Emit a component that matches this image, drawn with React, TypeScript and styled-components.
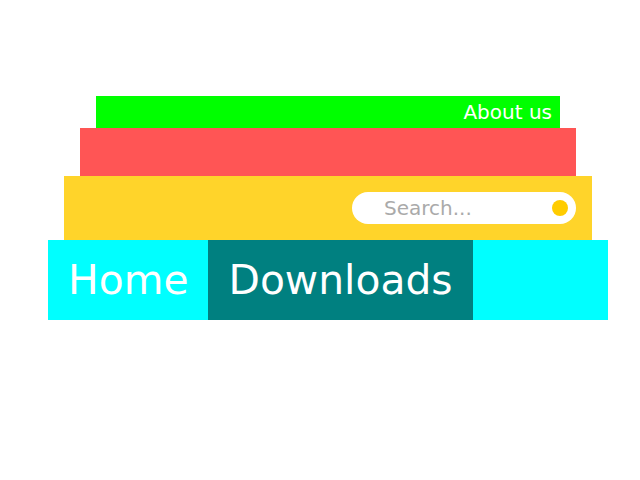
import React from "react";
import styled, { createGlobalStyle } from "styled-components";

const Global = createGlobalStyle`
  html, body { margin: 0; padding: 0; background: #ffffff; }
  body { font-family: "DejaVu Sans", sans-serif; }
`;

const Stack = styled.div`
  display: flex;
  flex-direction: column;
  align-items: center;
  width: 560px;
  margin: 96px 0 0 48px;
`;

const TopBar = styled.div`
  width: 464px;
  height: 32px;
  background: #00ff00;
  display: flex;
  justify-content: flex-end;
  align-items: center;
  padding-right: 8px;
  box-sizing: border-box;
`;

const TopLink = styled.a`
  color: #ffffff;
  font-size: 20px;
  line-height: 32px;
  text-decoration: none;
`;

const RedBar = styled.div`
  width: 496px;
  height: 48px;
  background: #ff5555;
`;

const SearchBar = styled.div`
  width: 528px;
  height: 64px;
  background: #ffd42a;
  display: flex;
  justify-content: flex-end;
  align-items: center;
  padding: 0 16px;
  box-sizing: border-box;
`;

const SearchBox = styled.div`
  width: 224px;
  height: 32px;
  background: #ffffff;
  border-radius: 16px;
  display: flex;
  align-items: center;
  padding: 0 8px 0 32px;
  box-sizing: border-box;
`;

const SearchInput = styled.input`
  flex: 1;
  min-width: 0;
  border: none;
  outline: none;
  background: transparent;
  font-family: "DejaVu Sans", sans-serif;
  font-size: 20px;
  padding: 0;
  color: #333;
  &::placeholder { color: #aaaaaa; }
`;

const Dot = styled.span`
  width: 16px;
  height: 16px;
  border-radius: 50%;
  background: #ffcc00;
  flex: none;
`;

const Nav = styled.nav`
  width: 560px;
  height: 80px;
  background: #00ffff;
  display: flex;
`;

const Tab = styled.a<{ $active?: boolean }>`
  display: block;
  padding: 1px 20px 0;
  font-size: 40.8px;
  line-height: 79px;
  color: #ffffff;
  text-decoration: none;
  background: ${(p) => (p.$active ? "#008080" : "transparent")};
`;

export default function App() {
  return (
    <>
      <Global />
      <Stack>
        <TopBar>
          <TopLink href="#">About us</TopLink>
        </TopBar>
        <RedBar />
        <SearchBar>
          <SearchBox>
            <SearchInput placeholder="Search..." />
            <Dot />
          </SearchBox>
        </SearchBar>
        <Nav>
          <Tab href="#">Home</Tab>
          <Tab href="#" $active>
            Downloads
          </Tab>
        </Nav>
      </Stack>
    </>
  );
}
